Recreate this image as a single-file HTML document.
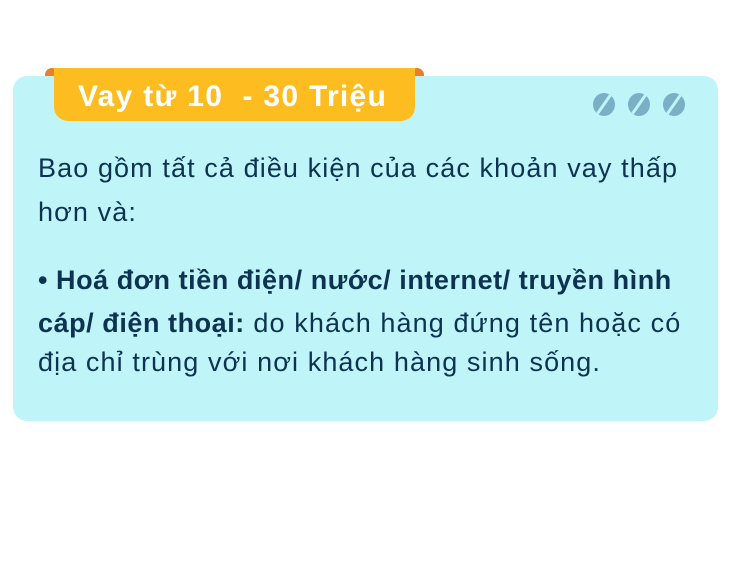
<!DOCTYPE html>
<html><head><meta charset="utf-8"><style>
body{margin:0;width:731px;height:578px;background:#fff;position:relative;overflow:hidden;font-family:"Liberation Sans",sans-serif}
.card{position:absolute;left:13px;top:76px;width:705px;height:345px;background:#bff4f9;border-radius:14px}
.ear{position:absolute;top:68px;width:14px;height:14px;background:#e8802a;border-radius:7px 7px 0 0}
.tab{position:absolute;left:54px;top:68px;width:361px;height:53px;background:#fdbd20;border-radius:0 0 14px 14px;color:#fff;font-weight:bold;font-size:30px;letter-spacing:1.3px;line-height:58px;padding-left:24px;box-sizing:border-box;white-space:nowrap}
.dot{position:absolute;top:93px;width:22px;height:23px;border-radius:50%;background:#79b0c6;overflow:hidden}
.dot:after{content:"";position:absolute;left:9px;top:-2px;width:3px;height:28px;background:#bff4f9;transform:rotate(35deg)}
.t{position:absolute;left:38px;color:#0d3350;font-size:27px;letter-spacing:1.1px;white-space:nowrap;line-height:30px}
b{font-weight:bold;letter-spacing:0.55px}
</style></head><body>
<div class="ear" style="left:45px"></div>
<div class="ear" style="left:410px"></div>
<div class="card"></div>
<div class="tab">Vay từ 10&nbsp; - 30 Triệu</div>
<div class="dot" style="left:593px"></div>
<div class="dot" style="left:628px"></div>
<div class="dot" style="left:663px"></div>
<div class="t" style="top:153px">Bao gồm tất cả điều kiện của các khoản vay thấp</div>
<div class="t" style="top:197px">hơn và:</div>
<div class="t" style="top:265px"><b>• Hoá đơn tiền điện/ nước/ internet/ truyền hình</b></div>
<div class="t" style="top:308px"><b>cáp/ điện thoại:</b> do khách hàng đứng tên hoặc có</div>
<div class="t" style="top:347px">địa chỉ trùng với nơi khách hàng sinh sống.</div>
</body></html>
